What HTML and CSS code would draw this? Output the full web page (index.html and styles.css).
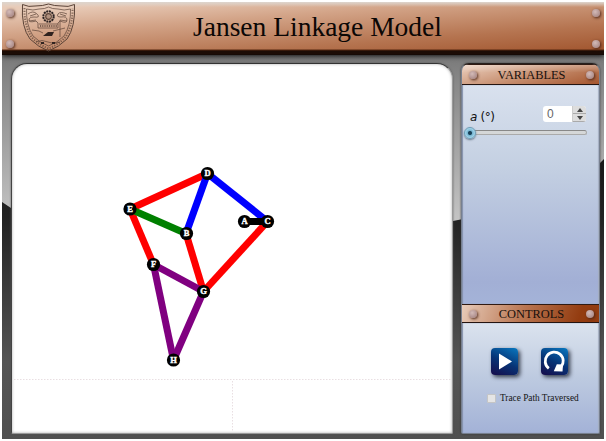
FILE: index.html
```html
<!DOCTYPE html>
<html lang="en">
<head>
<meta charset="utf-8">
<title>Jansen Linkage Model</title>
<link rel="stylesheet" href="styles.css">
</head>
<body>
<div class="app">
  <header class="banner">
    <div class="rivets"><i class="rivet"></i><i class="rivet"></i></div>
    <svg class="crest" viewBox="0 0 56 50" fill="none" stroke="#5c4438">
      <path d="M1.500 1.500Q8 4.500 14 3Q22 3 27.500 1Q33 3 41 3Q47 4.500 53.500 1.500Q54.500 24 46 36Q38 44 27.500 48Q17 44 9 36Q0 24 1.500 1.500Z" stroke-width="1"/>
      <path d="M5.500 6Q12 8 18 6Q24 6 27.500 4Q31 6 37 6Q43 8 49.500 6Q50 22 43 33Q36 40 27.500 43Q19 40 12 33Q5 22 5.500 6Z" stroke-width=".7"/>
      <path d="M3.500 5Q3 22 10.500 34Q18 42 27.500 45.500Q37 42 44.500 34Q52 22 51.500 5" stroke-width="2" stroke-dasharray="1.200 1.400" opacity=".7"/>
      <circle cx="27.500" cy="13.500" r="5.200" stroke="#2b2222" stroke-width="2" stroke-dasharray="2 .7"/>
      <circle cx="27.500" cy="13.500" r="2.800" stroke-width="1.200"/>
      <path d="M26 11v5M28 11v5M7 11q5-4 9 0t-3 3q-5 0-5 3t7 1l2 2v5h20v-5l2-2q7 3 7-1t-6-3q-5 0-3-3t9 0M9 13l6-2M8 18l7-1M39 11l6 2M39 17l7 1M18 21h19" stroke-width=".7"/>
      <path d="M11 27l7 1 4 2M32 28l12-3M39 17v17M15 39q6-3 12 0t12 0" stroke-width=".7"/>
      <path d="M22 33l5-4 6 0-2 4zM20 39h3v2h-3zM31 39h3v2h-3z" fill="#30231f" stroke="none"/>
      <path d="M19 23h17" stroke-width="1.600" stroke-dasharray="1 .8"/>
    </svg>
    <h1 class="title">Jansen Linkage Model</h1>
    <div class="rivets"><i class="rivet"></i><i class="rivet"></i></div>
  </header>
  <main class="workspace">
    <section class="stage">
      <svg class="linkage" viewBox="12 64 440 367">
        <g class="guides"><path d="M14 379.500H452M232.500 381V431"/></g>
        <g class="bars">
          <path class="red" d="M207.500 173.500L130 209"/>
          <path class="red" d="M130 209L153.500 264.500"/>
          <path class="green" d="M130 209L186 233.500"/>
          <path class="blue" d="M207.500 173.500L186 233.500"/>
          <path class="blue" d="M207.500 173.500L267.500 221.500"/>
          <path class="red" d="M186 233.500L203.500 291.500"/>
          <path class="red" d="M267.500 221.500L203.500 291.500"/>
          <path class="purple" d="M153.500 264.500L203.500 291.500"/>
          <path class="purple" d="M153.500 264.500L173.500 360"/>
          <path class="purple" d="M203.500 291.500L173.500 360"/>
          <path class="crank" d="M244.500 221.500H267.500"/>
        </g>
        <g class="joints">
          <circle cx="207.500" cy="173.500" r="6.600"/><circle cx="130" cy="209" r="6.600"/><circle cx="186.500" cy="233.500" r="6.600"/><circle cx="244.500" cy="221.500" r="6.600"/><circle cx="267.500" cy="221.500" r="6.600"/><circle cx="153.500" cy="264.500" r="6.600"/><circle cx="203.500" cy="291.500" r="6.600"/><circle cx="173.500" cy="360" r="6.600"/>
        </g>
        <g class="names">
          <text x="207.500" y="176.400">D</text><text x="130" y="211.900">E</text><text x="186.500" y="236.400">B</text><text x="244.500" y="224.400">A</text><text x="267.500" y="224.400">C</text><text x="153.500" y="267.400">F</text><text x="203.500" y="294.400">G</text><text x="173.500" y="362.900">H</text>
        </g>
      </svg>
    </section>
    <aside class="sidebar">
      <h2 class="bar"><i class="rivet"></i><span>VARIABLES</span><i class="rivet"></i></h2>
      <div class="panel variables">
        <div class="field">
          <label class="label"><em>a</em> (°)</label>
          <div class="spinner"><span class="value">0</span><span class="steps"><i class="step up"></i><i class="step down"></i></span></div>
        </div>
        <div class="slider"><i class="knob"></i></div>
      </div>
      <h2 class="bar second"><i class="rivet"></i><span>CONTROLS</span><i class="rivet"></i></h2>
      <div class="panel controls">
        <div class="buttons">
          <button class="button" aria-label="Play"><svg viewBox="0 0 27 27"><path d="M8 5.500L21 13.500L8 21.500Z" fill="#fff"/></svg></button>
          <button class="button" aria-label="Reset"><svg viewBox="0 0 27 27"><path d="M7.800 20.300A9 9 0 1 1 20 19" fill="none" stroke="#fff" stroke-width="2.800"/><path d="M15.800 16.200L22 16.500L21.500 23.500L12.800 23.300Z" fill="#fff"/></svg></button>
        </div>
        <label class="trace"><i class="box"></i><span>Trace Path Traversed</span></label>
      </div>
    </aside>
  </main>
</div>
</body>
</html>
```
FILE: styles.css
```css
* { box-sizing: border-box; }
body { margin: 0; padding: 2px; background: #fff; font-family: "Liberation Serif", serif; }
.app { position: relative; isolation: isolate; width: 602px; height: 437px; overflow: hidden; background: linear-gradient(#777 50px, #858585 75px, #c4c4c4 219px); }
.app::before { content: ""; position: absolute; z-index: -1; inset: 0; background: linear-gradient(#181818 155px, #222 215px, #555 360px, #505050); clip-path: polygon(0 200px, 9px 206px, 220px 219px, 451px 219px, 461px 217px, 597px 162px, 602px 157px, 602px 437px, 0 437px); }
.banner { display: flex; height: 53px; padding: 0 4px 3px; background: linear-gradient(#ddd5ce, rgba(221,213,206,0) 5px), linear-gradient(to top, #1c0c05 3px, #542710 4px, transparent 5px), linear-gradient(176deg, #e8cbb8 10%, #d3a488 35%, #b57450 70%, #9f522b 100%); border-bottom: 1px solid #160a05; box-shadow: 0 1px 5px #111; }
.rivets { display: flex; flex-direction: column; justify-content: space-between; padding: 7px 0 3px; }
.rivet { display: block; flex: none; width: 8px; height: 8px; border-radius: 50%; background: radial-gradient(circle at 40% 35%, #d3bab7, #b0918f 65%, #927472); box-shadow: 1px 1px 3px #4a2415; }
.crest { width: 56px; height: 50px; margin: 1px 0 0 7px; }
.title { flex: 1; margin: 0 0 0 -4px; padding-left: 120px; font-size: 27.5px; font-weight: 400; line-height: 50px; color: #0b0705; white-space: nowrap; }
.workspace { display: flex; gap: 8px; height: 384px; padding: 8px 4px 5px 9px; }
.stage { width: 442px; border: 1px solid #999; border-top-color: #333; border-left-color: #444; border-radius: 16px 16px 2px 2px; background: #fff; box-shadow: 0 0 2px #555, inset 0 0 3px #aaa; }
.linkage { display: block; width: 440px; height: 367px; }
.guides { stroke: #e9dfe2; stroke-dasharray: 1.500 1.500; fill: none; }
.bars { stroke-width: 7; }
.red { stroke: #f00; } .green { stroke: #008000; } .blue { stroke: #00f; } .purple { stroke: #800080; } .crank { stroke: #000; }
.names { fill: #fff; stroke: #fff; stroke-width: .4; font: bold 8.500px "Liberation Serif", serif; text-anchor: middle; }
.sidebar { display: flex; flex-direction: column; width: 139px; border: 1px solid #77808f; border-top-color: #27201d; border-radius: 8px 8px 2px 2px; box-shadow: 0 0 2px #333; overflow: hidden; }
.bar { display: flex; align-items: center; justify-content: space-between; flex: none; height: 21px; margin: 0; padding: 0 5px 0 7px; border-top: 1px solid #301a12; border-bottom: 1px solid #241410; background: linear-gradient(rgba(255,255,255,.25), transparent 40%), linear-gradient(165deg, #ecd1c0, #c48a6a 55%, #a5562f); font-size: 12.400px; font-weight: 400; line-height: 18px; color: #17100d; }
.second { height: 19px; background: linear-gradient(110deg, #e8ccba, #b97550 45%, #933c10 85%); }
.panel { box-shadow: inset 1px 0 1px #8390aa, inset -1px 0 1px #a5aec1; }
.variables { height: 219px; padding: 20px 14px 0 8px; background: linear-gradient(#d9e1ee, #c4d0e2 37%, #a2afd5 90%, #a4b3d8); }
.field { display: flex; justify-content: space-between; height: 22px; }
.label { padding-top: 5px; font: 12px/15px "DejaVu Sans", sans-serif; letter-spacing: -.4px; color: #111; }
.spinner { display: flex; width: 43px; height: 16px; margin: 1px -1px 0 0; border-radius: 3px; overflow: hidden; background: #fff; }
.value { width: 29px; padding-left: 4px; font: 12px/16px "Liberation Sans", sans-serif; color: #666; }
.steps { display: flex; flex-direction: column; width: 14px; background: #ddd; border-left: 1px solid #ccc; }
.step { display: flex; align-items: center; justify-content: center; height: 8px; border-bottom: 1px solid #aaa; }
.step::before { content: ""; border: 3px solid transparent; border-width: 0 3px 4px; border-bottom-color: #444; }
.down::before { border-width: 4px 3px 0; border-top-color: #444; }
.slider { display: flex; align-items: center; width: 117px; height: 5px; margin-top: 3px; border: 1px solid #aaa; border-top-color: #888; border-radius: 3px; background: #d5d7d8; }
.knob { width: 12px; height: 12px; flex: none; margin-left: -7px; border: 1px solid #6d9cb6; border-radius: 50%; background: radial-gradient(#173f55 0 1.500px, #76b5d2 2.500px, #a9daed 5px); box-shadow: 0 1px 2px #678; }
.controls { flex: 1; padding-top: 25px; background: linear-gradient(#dbe3ee, #bdcae0 50%, #a3b2d7); }
.buttons { display: flex; gap: 23px; padding-left: 29px; }
.button { width: 27px; height: 27px; padding: 0; border: 0; border-radius: 4px; background: linear-gradient(25deg, #180c4a, #073375 48%, #0878c0); box-shadow: 2px 2px 4px #303746; }
.button svg { display: block; }
.trace { display: flex; align-items: center; gap: 4px; margin: 17px 0 0 25px; font-size: 9.300px; line-height: 12px; color: #151515; white-space: nowrap; }
.box { width: 9px; height: 9px; border: 1px solid #c5c5c5; border-radius: 1px; background: #e5e5e5; }
```
